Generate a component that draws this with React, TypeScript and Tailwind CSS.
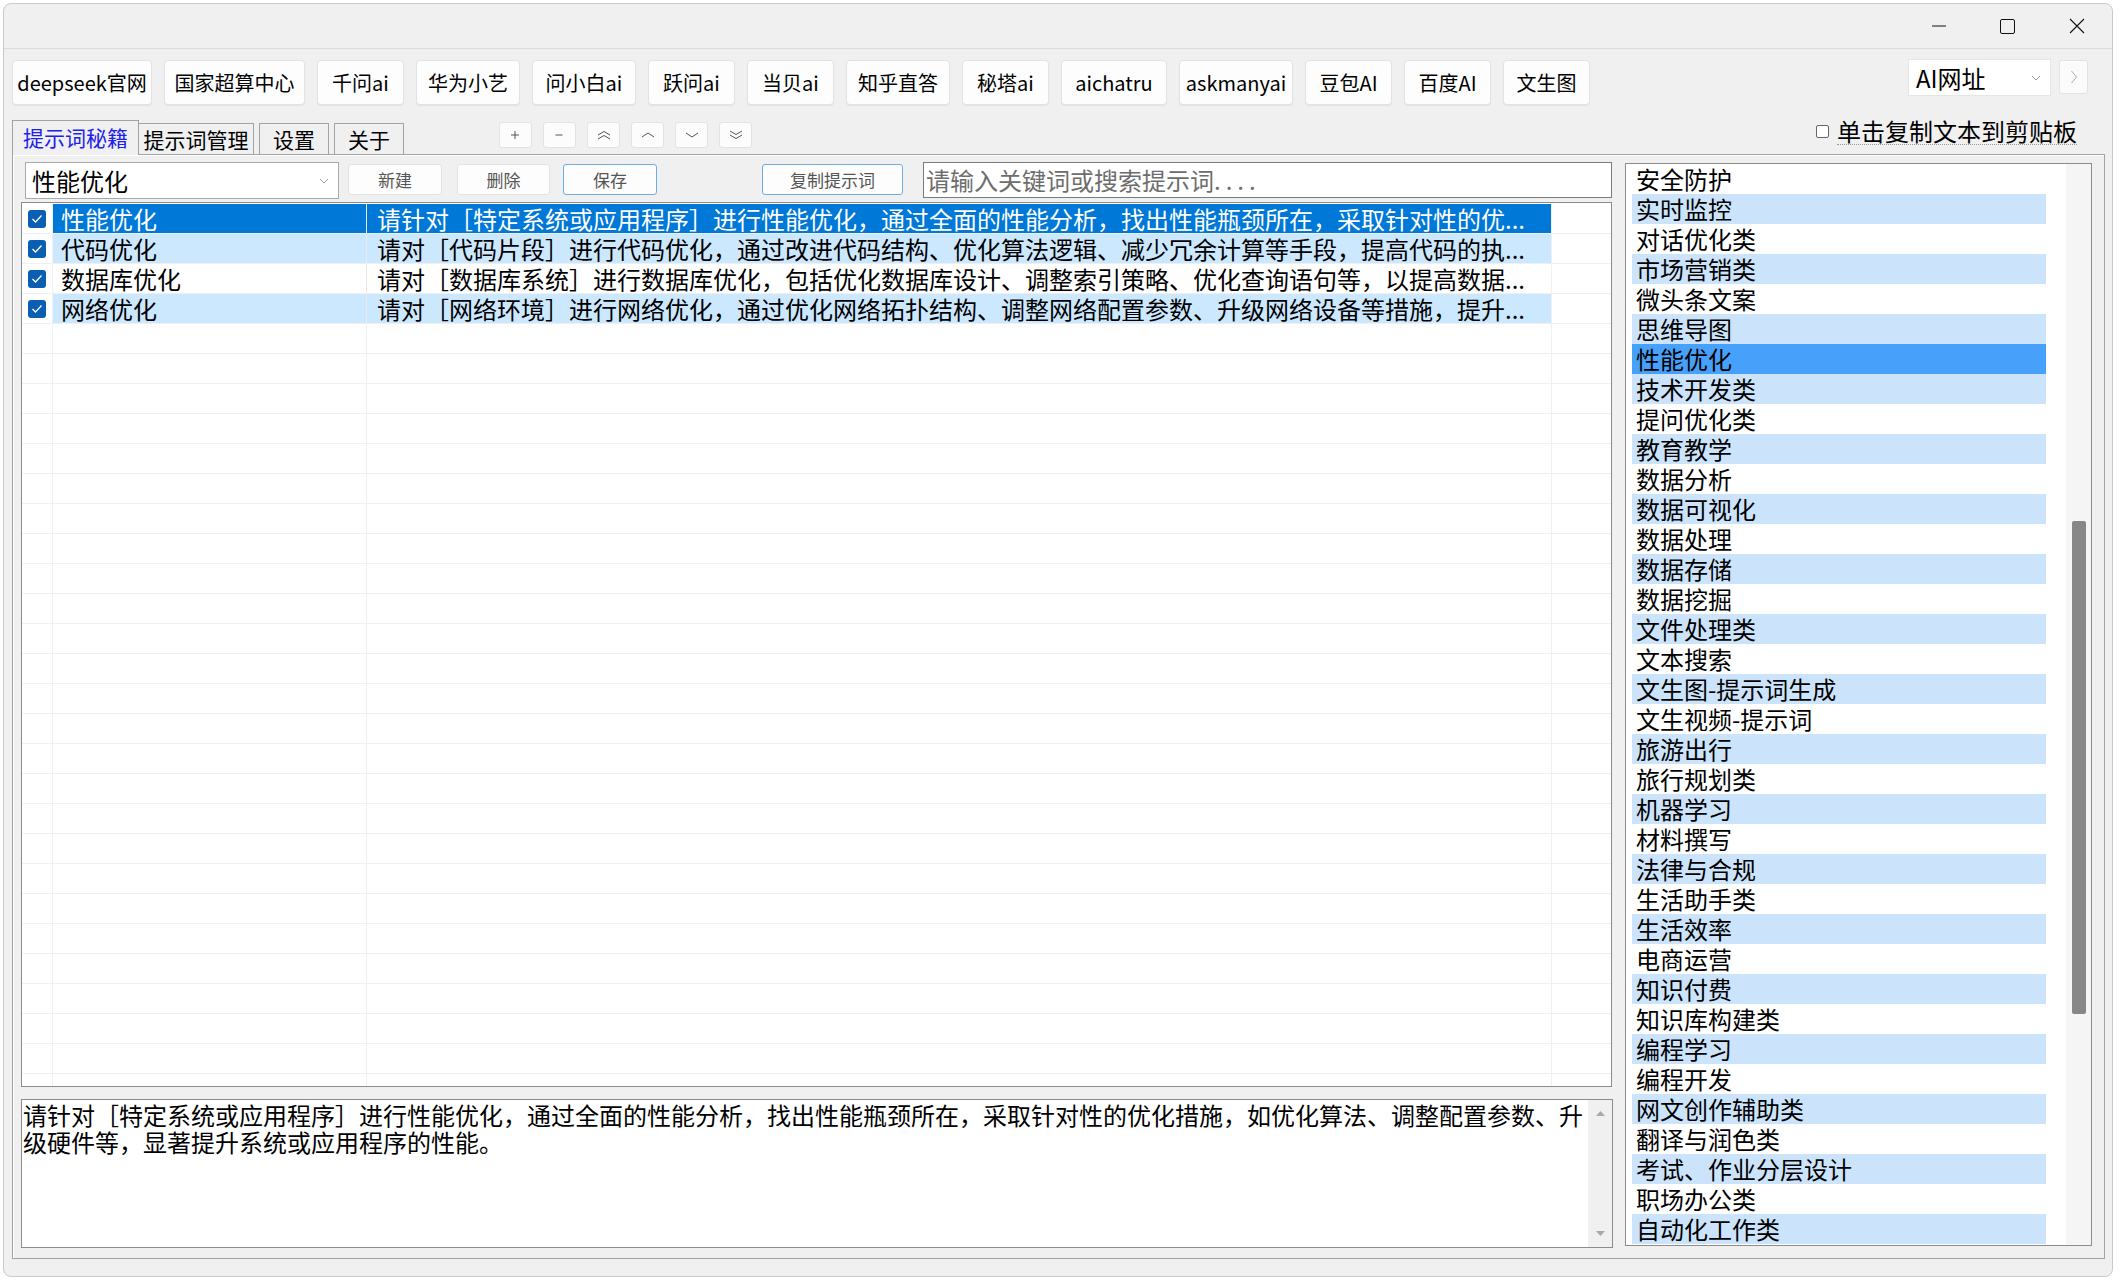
import React from "react"

const sites = [
  { label: "deepseek官网", w: "w-[140px]" },
  { label: "国家超算中心", w: "w-[141px]" },
  { label: "千问ai", w: "w-[87px]" },
  { label: "华为小艺", w: "w-[104px]" },
  { label: "问小白ai", w: "w-[104px]" },
  { label: "跃问ai", w: "w-[87px]" },
  { label: "当贝ai", w: "w-[87px]" },
  { label: "知乎直答", w: "w-[104px]" },
  { label: "秘塔ai", w: "w-[87px]" },
  { label: "aichatru", w: "w-[106px]" },
  { label: "askmanyai", w: "w-[114px]" },
  { label: "豆包AI", w: "w-[87px]" },
  { label: "百度AI", w: "w-[87px]" },
  { label: "文生图", w: "w-[87px]" },
]

const prompts = [
  {
    name: "性能优化",
    text: "请针对［特定系统或应用程序］进行性能优化，通过全面的性能分析，找出性能瓶颈所在，采取针对性的优",
  },
  {
    name: "代码优化",
    text: "请对［代码片段］进行代码优化，通过改进代码结构、优化算法逻辑、减少冗余计算等手段，提高代码的执",
  },
  {
    name: "数据库优化",
    text: "请对［数据库系统］进行数据库优化，包括优化数据库设计、调整索引策略、优化查询语句等，以提高数据",
  },
  {
    name: "网络优化",
    text: "请对［网络环境］进行网络优化，通过优化网络拓扑结构、调整网络配置参数、升级网络设备等措施，提升",
  },
]

const categories = [
  "安全防护", "实时监控", "对话优化类", "市场营销类", "微头条文案", "思维导图",
  "性能优化", "技术开发类", "提问优化类", "教育教学", "数据分析", "数据可视化",
  "数据处理", "数据存储", "数据挖掘", "文件处理类", "文本搜索", "文生图-提示词生成",
  "文生视频-提示词", "旅游出行", "旅行规划类", "机器学习", "材料撰写", "法律与合规",
  "生活助手类", "生活效率", "电商运营", "知识付费", "知识库构建类", "编程学习",
  "编程开发", "网文创作辅助类", "翻译与润色类", "考试、作业分层设计", "职场办公类", "自动化工作类",
]

function Chevron({ className = "" }: { className?: string }) {
  return (
    <svg width="10" height="6" viewBox="0 0 10 6" className={className}>
      <path d="M1 1L5 5L9 1" fill="none" stroke="#9a9a9a" strokeWidth="1" />
    </svg>
  )
}

const navIcons = [
  <path key="p" d="M6 2V10M2 6H10" />,
  <path key="m" d="M2.5 6H9.5" />,
  <path key="uu" d="M1 6L7 2.5L13 6M1 10L7 6.5L13 10" />,
  <path key="u" d="M1 8L7 4L13 8" />,
  <path key="d" d="M1 4L7 8L13 4" />,
  <path key="dd" d="M1 2L7 5.5L13 2M1 6L7 9.5L13 6" />,
]

function ToolButton({ label, w, active }: { label: string; w: string; active?: boolean }) {
  return (
    <div
      className={`${w} mt-[2px] flex h-[31px] items-center justify-center rounded-[3px] border bg-[#fdfdfd] text-[17px] leading-none text-[#555] ${
        active ? "border-[#6aaee8]" : "border-[#e2e2e2]"
      }`}
    >
      {label}
    </div>
  )
}

export default function App() {
  const emptyRows = Array.from({ length: 26 })

  return (
    <div className="h-[1280px] w-[2119px] overflow-hidden bg-white p-[3px] font-['Noto_Sans_CJK_SC','Noto_Sans',sans-serif] text-black">
      <div className="flex h-[1274px] w-[2110px] flex-col rounded-[8px] border border-[#c9c9c9] bg-[#f0f0f0]">
        {/* Title bar */}
        <div className="flex h-[45px] shrink-0 items-center justify-end border-b border-[#dadada] pr-[1px]">
          <div className="flex h-full w-[69px] items-center justify-center">
            <svg width="14" height="2" viewBox="0 0 14 2">
              <path d="M0 1H14" stroke="#111" strokeWidth="1" />
            </svg>
          </div>
          <div className="flex h-full w-[69px] items-center justify-center">
            <svg width="15" height="15" viewBox="0 0 15 15">
              <rect x="0.5" y="0.5" width="14" height="14" rx="1.5" fill="none" stroke="#111" strokeWidth="1" />
            </svg>
          </div>
          <div className="flex h-full w-[69px] items-center justify-center">
            <svg width="16" height="16" viewBox="0 0 16 16">
              <path d="M1 1L15 15M15 1L1 15" stroke="#111" strokeWidth="1.1" />
            </svg>
          </div>
        </div>

        {/* Site buttons */}
        <div className="mt-[11px] flex items-start pl-[8px] pr-[24px]">
          <div className="flex gap-[12px]">
            {sites.map((s) => (
              <div
                key={s.label}
                className={`${s.w} flex h-[45px] items-center justify-center rounded-[4px] border border-[#e3e3e3] bg-[#fdfdfd] text-[20px] leading-none shadow-[0_1px_1px_rgba(0,0,0,0.06)]`}
              >
                {s.label}
              </div>
            ))}
          </div>
          <div className="ml-auto -mt-[1px] flex h-[37px] w-[143px] items-center justify-between border border-[#e6e6e6] bg-white pl-[7px] pr-[9px] text-[24px] leading-none">
            <span>AI网址</span>
            <Chevron />
          </div>
          <div className="ml-[8px] flex h-[34px] w-[29px] items-center justify-center rounded-[3px] border border-[#e3e3e3] bg-[#fbfbfb]">
            <svg width="8" height="14" viewBox="0 0 8 14">
              <path d="M1.5 1L6.5 7L1.5 13" fill="none" stroke="#aaa" strokeWidth="1" />
            </svg>
          </div>
        </div>

        {/* Tabs row */}
        <div className="mt-[15px] flex h-[34px] items-start pl-[8px] pr-[35px]">
          <div className="flex h-full items-end">
            <div className="relative z-10 -mb-[1px] flex h-[35px] w-[127px] items-center justify-center border-x border-t border-[#a3a3a3] bg-[#f0f0f0] pb-[1px] text-[21px] leading-none text-[#2020ee]">
              提示词秘籍
            </div>
            <div className="flex h-[31px] w-[115px] items-center justify-center border-r border-t border-[#a3a3a3] text-[21px] leading-none">
              提示词管理
            </div>
            <div className="ml-[5px] flex h-[31px] w-[70px] items-center justify-center border-x border-t border-[#a3a3a3] text-[21px] leading-none">
              设置
            </div>
            <div className="ml-[5px] flex h-[31px] w-[70px] items-center justify-center border-x border-t border-[#a3a3a3] text-[21px] leading-none">
              关于
            </div>
          </div>
          <div className="ml-[95px] mt-[2px] flex gap-[11px]">
            {navIcons.map((icon, i) => (
              <div
                key={i}
                className="flex h-[26px] w-[33px] items-center justify-center rounded-[3px] border border-[#e3e3e3] bg-[#fcfcfc]"
              >
                <svg width="14" height="12" viewBox="0 0 14 12" fill="none" stroke="#555" strokeWidth="1">
                  {icon}
                </svg>
              </div>
            ))}
          </div>
          <div className="ml-auto -mt-[2px] flex items-center">
            <div className="h-[13px] w-[13px] rounded-[2px] border border-[#666] bg-white" />
            <span className="ml-[8px] border-b border-dotted border-[#999] text-[24px] leading-[26px]">
              单击复制文本到剪贴板
            </span>
          </div>
        </div>

        {/* Tab panel */}
        <div className="ml-[8px] flex h-[1105px] w-[2093px] border border-[#a3a3a3] shadow-[inset_1px_1px_0_#fff]">
          {/* Left column */}
          <div className="flex w-[1600px] shrink-0 flex-col pl-[8px] pt-[7px]">
            {/* Toolbar */}
            <div className="flex h-[37px] items-start">
              <div className="ml-[4px] flex h-[37px] w-[314px] items-center justify-between border border-[#a9a9a9] bg-white pl-[6px] pr-[9px] text-[24px] leading-none">
                <span>性能优化</span>
                <Chevron />
              </div>
              <div className="ml-[9px]">
                <ToolButton label="新建" w="w-[94px]" />
              </div>
              <div className="ml-[15px]">
                <ToolButton label="删除" w="w-[93px]" />
              </div>
              <div className="ml-[13px]">
                <ToolButton label="保存" w="w-[94px]" active />
              </div>
              <div className="ml-[105px]">
                <ToolButton label="复制提示词" w="w-[141px]" active />
              </div>
              <div className="ml-[20px] flex h-[36px] w-[689px] items-center whitespace-nowrap border border-[#7a7a7a] bg-white pl-[2px] text-[24px] leading-[30px] text-[#6d6d6d]">
                请输入关键词或搜索提示词<span className="tracking-[5px]">....</span>
              </div>
            </div>

            {/* Table */}
            <div className="mt-[3px] h-[885px] w-[1591px] overflow-hidden border border-[#8c8c8c] bg-white pt-[1px]">
              {prompts.map((p, i) => {
                const selected = i === 0
                const alt = i % 2 === 1
                const rowBg = selected ? "bg-[#0078d7] text-white" : alt ? "bg-[#cce8ff]" : "bg-white"
                return (
                  <div key={p.name} className="flex h-[30px] border-b border-[#f0f0f0] text-[24px] leading-[29px]">
                    <div className="flex w-[31px] shrink-0 items-center justify-center border-r border-[#f0f0f0] bg-white">
                      <div className="flex h-[18px] w-[18px] items-center justify-center rounded-[3px] bg-[#0b5fb3]">
                        <svg width="12" height="10" viewBox="0 0 12 10">
                          <path d="M1.5 5L4.5 8L10.5 1.5" fill="none" stroke="#fff" strokeWidth="1.3" />
                        </svg>
                      </div>
                    </div>
                    <div className={`w-[314px] shrink-0 whitespace-nowrap border-r border-[#eaeaea] pl-[8px] ${rowBg}`}>{p.name}</div>
                    <div className={`w-[1185px] shrink-0 whitespace-nowrap border-r border-[#f0f0f0] pl-[10px] ${rowBg}`}>
                      {p.text}...
                    </div>
                    <div className="flex-1 bg-white" />
                  </div>
                )
              })}
              {emptyRows.map((_, i) => (
                <div key={i} className="flex h-[30px] border-b border-[#f0f0f0]">
                  <div className="w-[31px] shrink-0 border-r border-[#f0f0f0]" />
                  <div className="w-[314px] shrink-0 border-r border-[#f0f0f0]" />
                  <div className="w-[1185px] shrink-0 border-r border-[#f0f0f0]" />
                  <div className="flex-1" />
                </div>
              ))}
            </div>

            {/* Preview text */}
            <div className="mt-[12px] flex h-[149px] w-[1592px] border border-[#8c8c8c] bg-white">
              <div className="flex-1 whitespace-nowrap pl-[1px] pt-[1px] text-[24px] leading-[27px]">
                请针对［特定系统或应用程序］进行性能优化，通过全面的性能分析，找出性能瓶颈所在，采取针对性的优化措施，如优化算法、调整配置参数、升
                <br />
                级硬件等，显著提升系统或应用程序的性能。
              </div>
              <div className="flex w-[24px] flex-col items-center justify-between bg-[#f0f0f0] py-[11px]">
                <svg width="9" height="5" viewBox="0 0 9 5">
                  <path d="M0 5L4.5 0L9 5Z" fill="#a8a8a8" />
                </svg>
                <svg width="9" height="5" viewBox="0 0 9 5">
                  <path d="M0 0L4.5 5L9 0Z" fill="#a8a8a8" />
                </svg>
              </div>
            </div>
          </div>

          {/* Category list */}
          <div className="ml-[12px] mt-[8px] flex h-[1083px] w-[467px] shrink-0 border border-[#8c8c8c] bg-white">
            <div className="flex-1 overflow-hidden pl-[6px] pr-[20px]">
              {categories.map((c, i) => (
                <div
                  key={c}
                  className={`h-[30px] whitespace-nowrap pl-[4px] text-[24px] leading-[29px] ${
                    i === 6 ? "bg-[#47a1fa]" : i % 2 === 1 ? "bg-[#cce4fb]" : ""
                  }`}
                >
                  {c}
                </div>
              ))}
            </div>
            <div className="flex w-[25px] flex-col bg-[#f5f5f5]">
              <div className="ml-[6px] mt-[357px] h-[493px] w-[14px] rounded-[2px] bg-[#878787]" />
            </div>
          </div>
        </div>
      </div>
    </div>
  )
}
